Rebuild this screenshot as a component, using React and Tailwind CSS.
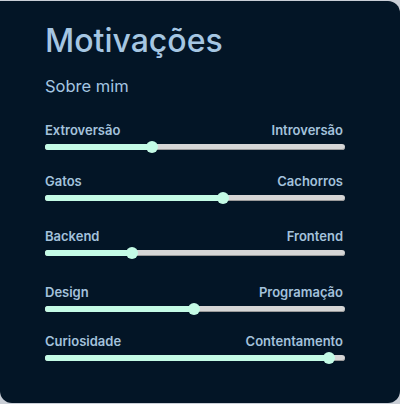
import React from "react";

const rows = [
  { l: "Extroversão", r: "Introversão", v: 35.7, mt: "mt-[26px]" },
  { l: "Gatos", r: "Cachorros", v: 59.3, mt: "mt-[23px]" },
  { l: "Backend", r: "Frontend", v: 29, mt: "mt-[27px]" },
  { l: "Design", r: "Programação", v: 49.7, mt: "mt-[28px]" },
  { l: "Curiosidade", r: "Contentamento", v: 94.7, mt: "mt-[21px]" },
];

function Row({ l, r, v, mt }) {
  return (
    <div className={`${mt} w-[300px]`}>
      <div className="flex justify-between text-[13px] leading-[16px] font-semibold text-[#a3c2dc]">
        <span>{l}</span>
        <span className="pr-[2px]">{r}</span>
      </div>
      <div className="relative mt-[6px] h-[6px] w-[300px] rounded-full bg-[#d6d6d6] shadow-[inset_0_-1px_0_#9a9a9a]">
        <div
          className="absolute left-0 top-0 h-[6px] rounded-full bg-[#c4fbe6]"
          style={{ width: `${v}%` }}
        />
        <div
          className="absolute top-[-3px] h-[12px] w-[12px] -translate-x-1/2 rounded-full bg-[#c4fbe6]"
          style={{ left: `${v}%` }}
        />
      </div>
    </div>
  );
}

export default function App() {
  return (
    <div className="w-[400px] h-[404px] bg-[#c9ced6] pt-px" style={{ fontFamily: "Inter, 'Noto Sans', sans-serif" }}>
      <div className="h-[402px] w-[400px] rounded-tr-[12px] rounded-b-[12px] bg-[#031526] pl-[45px] pt-[21px] flex flex-col">
        <h1 className="text-[32px] leading-[38px] font-medium text-[#a5c6e2]">Motivações</h1>
        <p className="mt-[16px] text-[16.5px] leading-[20px] text-[#a5c6e2]">Sobre mim</p>
        {rows.map((row) => (
          <Row key={row.l} {...row} />
        ))}
      </div>
    </div>
  );
}
